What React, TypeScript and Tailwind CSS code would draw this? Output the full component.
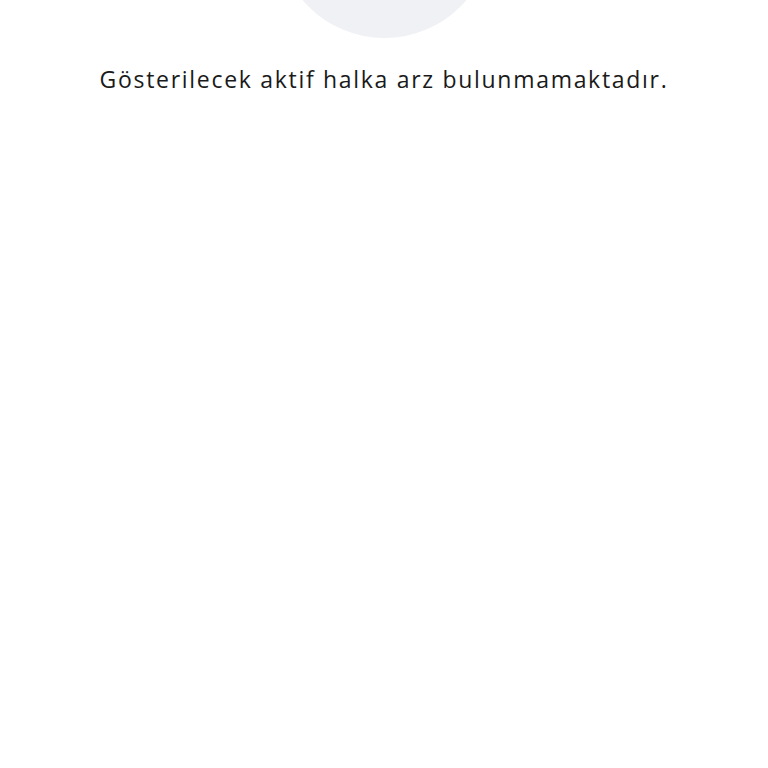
export default function App() {
  return (
    <div className="min-h-screen bg-white overflow-hidden flex flex-col items-center" style={{ fontFamily: '"Open Sans", "Noto Sans", sans-serif' }}>
      <div className="w-[215px] h-[215px] shrink-0 rounded-full bg-[#f0f1f5] -mt-[177px]" />
      <p className="mt-[25px] text-[23px] leading-[32px] text-[#1a1a1a] tracking-[1.7px]">
        Gösterilecek aktif halka arz bulunmamaktadır.
      </p>
    </div>
  )
}
